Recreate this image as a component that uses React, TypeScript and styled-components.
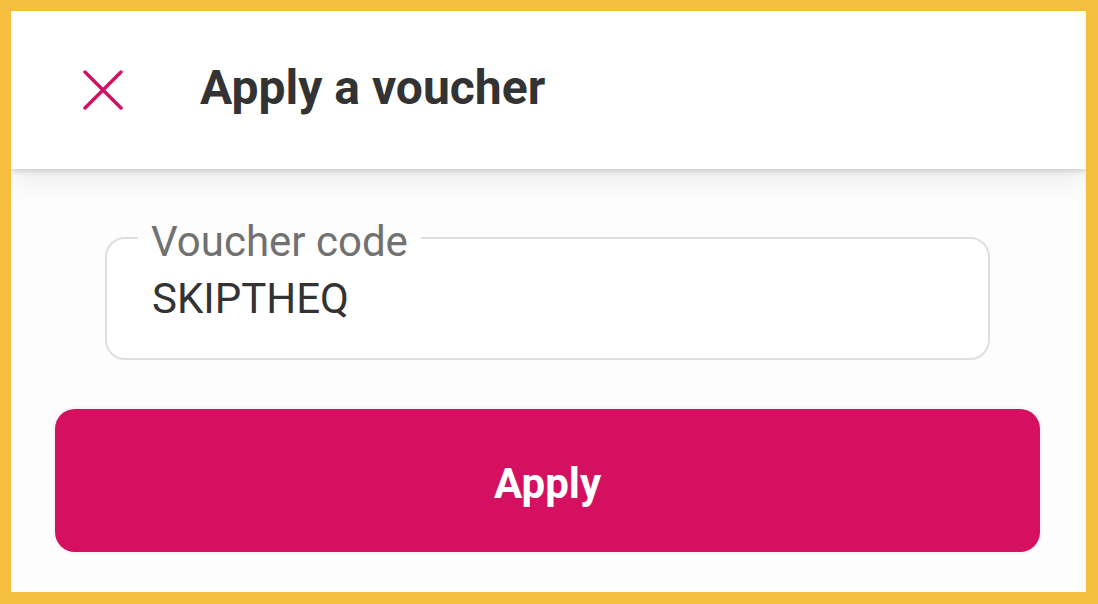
import React from "react";
import styled, { createGlobalStyle } from "styled-components";

const Global = createGlobalStyle`
  html, body { margin: 0; padding: 0; }
  body { background: #f5be3e; font-family: Roboto, "Liberation Sans", sans-serif; }
`;

const Frame = styled.div`
  width: 1098px;
  height: 604px;
  box-sizing: border-box;
  padding: 11px 12px 12px 11px;
  background: #f5be3e;
`;

const Panel = styled.div`
  height: 100%;
  background: #fdfdfd;
  display: flex;
  flex-direction: column;
  overflow: hidden;
`;

const Header = styled.header`
  height: 158px;
  flex-shrink: 0;
  background: #ffffff;
  display: flex;
  align-items: center;
  padding-left: 72px;
  gap: 77px;
  box-shadow: 0 2px 6px rgba(0, 0, 0, 0.16), 0 8px 30px rgba(0, 0, 0, 0.09);
  position: relative;
  z-index: 1;
`;

const CloseButton = styled.button`
  border: none;
  background: none;
  padding: 0;
  width: 40px;
  height: 40px;
  display: flex;
  cursor: pointer;
`;

const Title = styled.h1`
  margin: 0 0 4px 0;
  font-family: Roboto, sans-serif;
  font-weight: 700;
  font-size: 48px;
  line-height: 56px;
  color: #333333;
`;

const Body = styled.div`
  display: flex;
  flex-direction: column;
  padding: 47px 46px 0 44px;
`;

const Field = styled.fieldset`
  margin: 0 50px;
  height: 144px;
  box-sizing: border-box;
  border: 2px solid #dedede;
  border-radius: 20px;
  padding: 0 0 0 45px;
  background: #ffffff;
`;

const Legend = styled.legend`
  margin-left: -14px;
  padding: 8px 13px 0;
  font-size: 42px;
  line-height: 36px;
  color: #717171;
`;

const Value = styled.div`
  font-size: 42px;
  line-height: 48px;
  color: #333333;
  margin-top: 15px;
`;

const ApplyButton = styled.button`
  margin-top: 49px;
  height: 143px;
  padding: 6px 0 0;
  border: none;
  border-radius: 20px;
  background: #d51060;
  box-shadow: 0 0 4px rgba(0, 0, 0, 0.1);
  color: #ffffff;
  font-family: Roboto, sans-serif;
  font-weight: 700;
  font-size: 42px;
  cursor: pointer;
`;

export default function App() {
  return (
    <>
      <Global />
      <Frame>
        <Panel>
          <Header>
            <CloseButton aria-label="Close">
              <svg width="40" height="40" viewBox="0 0 40 40">
                <path
                  d="M2 2 L38 38 M38 2 L2 38"
                  stroke="#d41060"
                  strokeWidth="3.4"
                  strokeLinecap="round"
                  fill="none"
                />
              </svg>
            </CloseButton>
            <Title>Apply a voucher</Title>
          </Header>
          <Body>
            <Field>
              <Legend>Voucher code</Legend>
              <Value>SKIPTHEQ</Value>
            </Field>
            <ApplyButton>Apply</ApplyButton>
          </Body>
        </Panel>
      </Frame>
    </>
  );
}
